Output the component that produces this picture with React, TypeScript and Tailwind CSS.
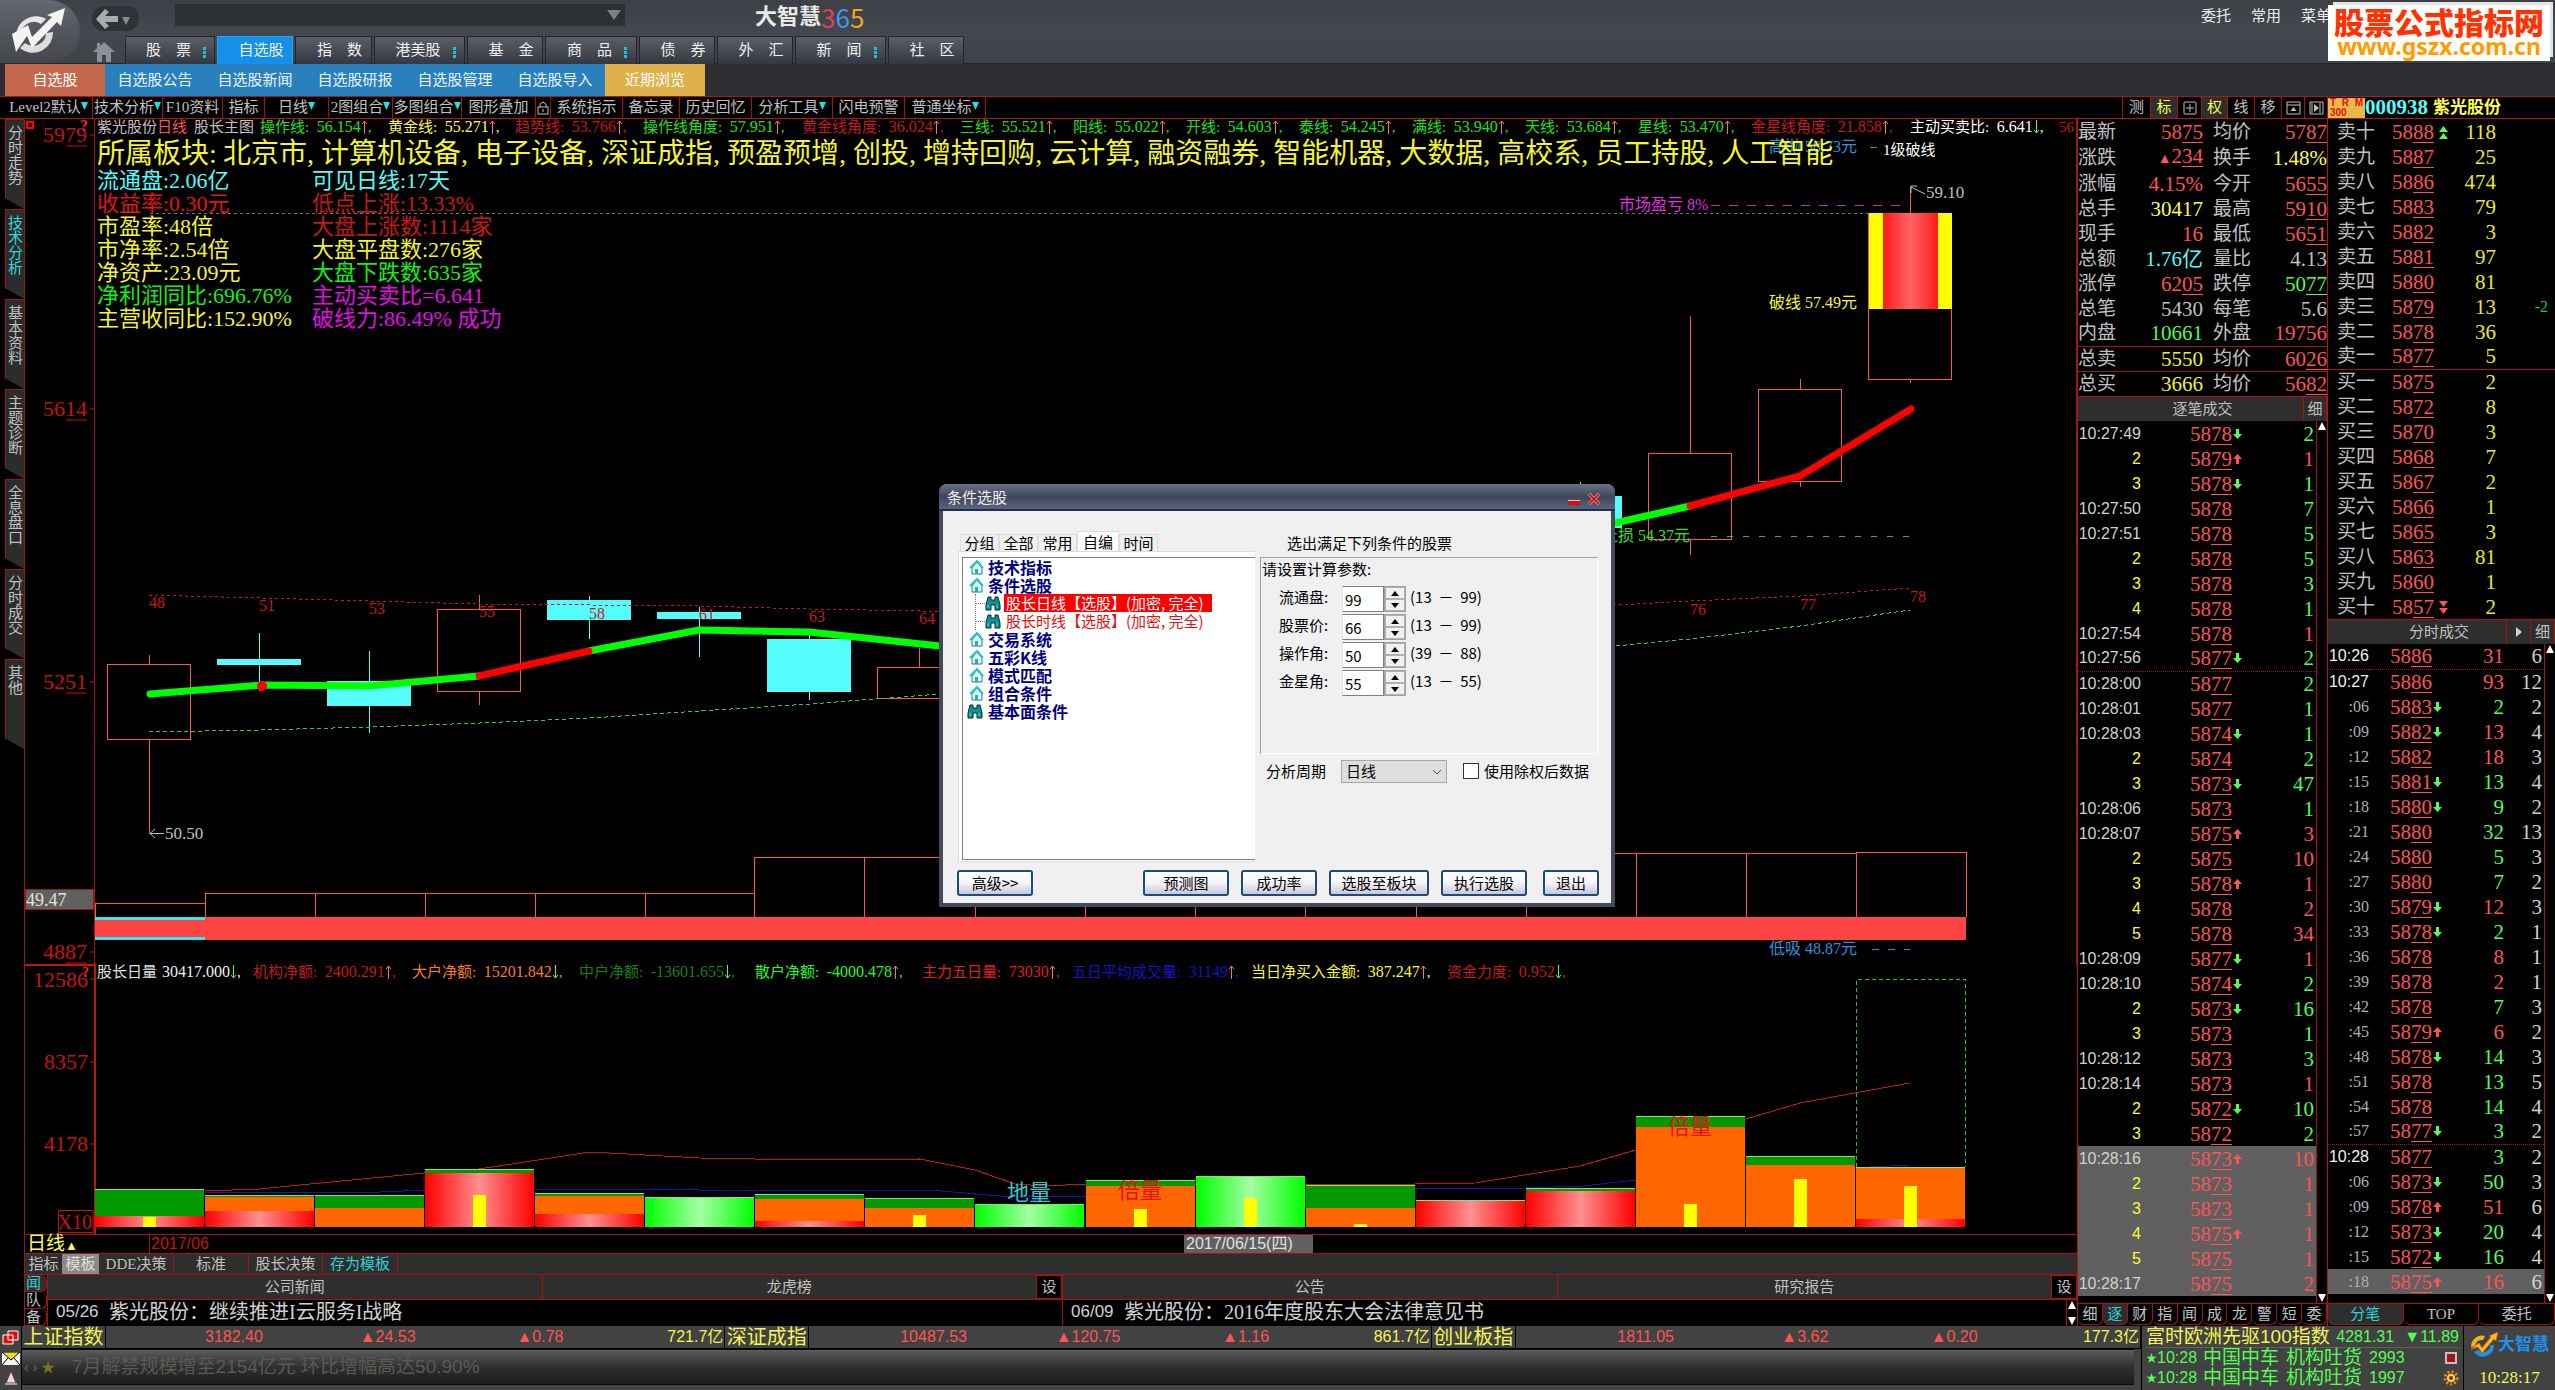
import React, { useState } from "react";

const RED = "#fc5454";
const GREEN = "#54fc54";

const NAV_TABS = [
  { label: "股　票", more: true, width: "w-[90px]" },
  { label: "自选股", active: true, width: "w-[76px]" },
  { label: "指　数", width: "w-[77px]" },
  { label: "港美股", more: true, width: "w-[91px]" },
  { label: "基　金", width: "w-[76px]" },
  { label: "商　品", more: true, width: "w-[92px]" },
  { label: "债　券", width: "w-[76px]" },
  { label: "外　汇", width: "w-[76px]" },
  { label: "新　闻", more: true, width: "w-[91px]" },
  { label: "社　区", width: "w-[76px]" },
];

const SUB_TABS = ["自选股公告", "自选股新闻", "自选股研报", "自选股管理", "自选股导入"];

const TOOLS = [
  { label: "Level2默认", menu: true, width: "w-[88px]" },
  { label: "技术分析", menu: true, width: "w-[70px]" },
  { label: "F10资料", width: "w-[60px]" },
  { label: "指标", width: "w-[42px]" },
  { label: "日线", menu: true, width: "w-[64px]" },
  { label: "2图组合", menu: true, width: "w-[64px]" },
  { label: "多图组合", menu: true, width: "w-[69px]" },
  { label: "图形叠加", width: "w-[74px]" },
  { label: "", lock: true, width: "w-[15px]" },
  { label: "系统指示", width: "w-[72px]" },
  { label: "备忘录", width: "w-[57px]" },
  { label: "历史回忆", width: "w-[72px]" },
  { label: "分析工具", menu: true, width: "w-[81px]" },
  { label: "闪电预警", width: "w-[72px]" },
  { label: "普通坐标", menu: true, width: "w-[81px]" },
];

const SIDE_TABS = ["分时走势", "技术分析", "基本资料", "主题诊断", "全息盘口", "分时成交", "其他"];

type Indicator = { label: string; value?: string; dir?: "up" | "down"; color: string; width: string };

const MAIN_INDICATORS: Indicator[] = [
  { label: "操作线", value: "56.154", dir: "up", color: "text-[#20e020]", width: "w-[128px]" },
  { label: "黄金线", value: "55.271", dir: "up", color: "text-[#fcfc54]", width: "w-[127px]" },
  { label: "趋势线", value: "53.766", dir: "up", color: "text-[#c41a1a]", width: "w-[128px]" },
  { label: "操作线角度", value: "57.951", dir: "up", color: "text-[#20e020]", width: "w-[159px]" },
  { label: "黄金线角度", value: "36.024", dir: "up", color: "text-[#c41a1a]", width: "w-[158px]" },
  { label: "三线", value: "55.521", dir: "up", color: "text-[#20e020]", width: "w-[113px]" },
  { label: "阳线", value: "55.022", dir: "up", color: "text-[#20e020]", width: "w-[113px]" },
  { label: "开线", value: "54.603", dir: "up", color: "text-[#20e020]", width: "w-[113px]" },
  { label: "泰线", value: "54.245", dir: "up", color: "text-[#20e020]", width: "w-[113px]" },
  { label: "满线", value: "53.940", dir: "up", color: "text-[#20e020]", width: "w-[113px]" },
  { label: "天线", value: "53.684", dir: "up", color: "text-[#20e020]", width: "w-[113px]" },
  { label: "星线", value: "53.470", dir: "up", color: "text-[#20e020]", width: "w-[113px]" },
  { label: "金星线角度", value: "21.858", dir: "up", color: "text-[#c41a1a]", width: "w-[159px]" },
  { label: "主动买卖比", value: "6.641", dir: "down", color: "text-white", width: "w-[149px]" },
];

const VOLUME_INDICATORS: Indicator[] = [
  { label: "机构净额", value: "2400.291", dir: "up", color: "text-[#c41a1a]", width: "w-[159px]" },
  { label: "大户净额", value: "15201.842", dir: "down", color: "text-[#ff7a1e]", width: "w-[167px]" },
  { label: "中户净额", value: "-13601.655", dir: "down", color: "text-[#12801a]", width: "w-[176px]" },
  { label: "散户净额", value: "-4000.478", dir: "up", color: "text-[#20fc20]", width: "w-[167px]" },
  { label: "主力五日量", value: "73030", dir: "up", color: "text-[#e02020]", width: "w-[150px]" },
  { label: "五日平均成交量", value: "31149", dir: "up", color: "text-[#1414c8]", width: "w-[179px]" },
  { label: "当日净买入金额", value: "387.247", dir: "up", color: "text-[#fcfc20]", width: "w-[196px]" },
  { label: "资金力度", value: "0.952", dir: "down", color: "text-[#c41a1a]", width: "w-[140px]" },
];

const BOARDS = [
  "北京市", "计算机设备", "电子设备", "深证成指", "预盈预增", "创投", "增持回购",
  "云计算", "融资融券", "智能机器", "大数据", "高校系", "员工持股", "人工智能",
];

const FACTS = [
  ["流通盘:2.06亿", "text-[#54fcfc]", "可见日线:17天", "text-[#54fcfc]"],
  ["收益率:0.30元", "text-[#e01414]", "低点上涨:13.33%", "text-[#c41a1a]"],
  ["市盈率:48倍", "text-[#f4f430]", "大盘上涨数:1114家", "text-[#c41a1a]"],
  ["市净率:2.54倍", "text-[#f4f430]", "大盘平盘数:276家", "text-[#f4f430]"],
  ["净资产:23.09元", "text-[#f4f430]", "大盘下跌数:635家", "text-[#14f014]"],
  ["净利润同比:696.76%", "text-[#14f014]", "主动买卖比=6.641", "text-[#e010e0]"],
  ["主营收同比:152.90%", "text-[#f4f430]", "破线力:86.49% 成功", "text-[#e010e0]"],
];

// label, value, colour, underline the decimals
type Cell = [string, string, string, boolean];
const SUMMARY: [Cell, Cell][] = [
  [["最新", "5875", "text-[#fc5454]", true], ["均价", "5787", "text-[#fc5454]", true]],
  [["涨跌", "▲234", "text-[#fc5454]", true], ["换手", "1.48%", "text-[#fcfc54]", false]],
  [["涨幅", "4.15%", "text-[#fc5454]", false], ["今开", "5655", "text-[#fc5454]", true]],
  [["总手", "30417", "text-[#fcfc54]", false], ["最高", "5910", "text-[#fc5454]", true]],
  [["现手", "16", "text-[#fc5454]", false], ["最低", "5651", "text-[#fc5454]", true]],
  [["总额", "1.76亿", "text-[#54fcfc]", false], ["量比", "4.13", "text-[#c0c0c0]", false]],
  [["涨停", "6205", "text-[#fc5454]", true], ["跌停", "5077", "text-[#54fc54]", true]],
  [["总笔", "5430", "text-[#c0c0c0]", false], ["每笔", "5.6", "text-[#c0c0c0]", false]],
  [["内盘", "10661", "text-[#54fc54]", false], ["外盘", "19756", "text-[#fc5454]", false]],
  [["总卖", "5550", "text-[#f0f030]", false], ["均价", "6026", "text-[#fc5454]", true]],
  [["总买", "3666", "text-[#f0f030]", false], ["均价", "5682", "text-[#fc5454]", true]],
];

const ASKS = [
  ["卖十", "5888", "118"], ["卖九", "5887", "25"], ["卖八", "5886", "474"], ["卖七", "5883", "79"],
  ["卖六", "5882", "3"], ["卖五", "5881", "97"], ["卖四", "5880", "81"], ["卖三", "5879", "13"],
  ["卖二", "5878", "36"], ["卖一", "5877", "5"],
];
const BIDS = [
  ["买一", "5875", "2"], ["买二", "5872", "8"], ["买三", "5870", "3"], ["买四", "5868", "7"],
  ["买五", "5867", "2"], ["买六", "5866", "1"], ["买七", "5865", "3"], ["买八", "5863", "81"],
  ["买九", "5860", "1"], ["买十", "5857", "2"],
];

// time, price (u/d = moved up/down), lots (r/g = buy/sell)
const TICKS = [
  "10:27:49 5878d 2g", "2 5879u 1r", "3 5878d 1g", "10:27:50 5878 7g", "10:27:51 5878 5g",
  "2 5878 5g", "3 5878 3g", "4 5878 1g", "10:27:54 5878 1r", "10:27:56 5877d 2g",
  "10:28:00 5877 2g", "10:28:01 5877 1g", "10:28:03 5874d 1g", "2 5874 2g", "3 5873d 47g",
  "10:28:06 5873 1g", "10:28:07 5875u 3r", "2 5875 10r", "3 5878u 1r", "4 5878 2r",
  "5 5878 34r", "10:28:09 5877d 1r", "10:28:10 5874d 2g", "2 5873d 16g", "3 5873 1g",
  "10:28:12 5873 3g", "10:28:14 5873 1r", "2 5872d 10g", "3 5872 2g", "10:28:16 5873u 10r",
  "2 5873 1r", "3 5873 1r", "4 5875u 1r", "5 5875 1r", "10:28:17 5875 2r",
];

const MINUTES = [
  "10:26 5886 31r 6", "10:27 5886 93r 12", ":06 5883d 2g 2", ":09 5882d 13r 4", ":12 5882 18r 3",
  ":15 5881d 13g 4", ":18 5880d 9g 2", ":21 5880 32g 13", ":24 5880 5g 3", ":27 5880 7g 2",
  ":30 5879d 12r 3", ":33 5878d 2g 1", ":36 5878 8r 1", ":39 5878 2r 1", ":42 5878 7g 3",
  ":45 5879u 6r 2", ":48 5878d 14g 3", ":51 5878 13g 5", ":54 5878 14g 4", ":57 5877d 3g 2",
  "10:28 5877 3g 2", ":06 5873d 50g 3", ":09 5878u 51r 6", ":12 5873d 20g 4", ":15 5872d 16g 4",
  ":18 5875u 16r 6",
];

const INDEXES = [
  { name: "上证指数", last: "3182.40", change: "▲24.53", pct: "▲0.78", amount: "721.7亿" },
  { name: "深证成指", last: "10487.53", change: "▲120.75", pct: "▲1.16", amount: "861.7亿" },
  { name: "创业板指", last: "1811.05", change: "▲3.62", pct: "▲0.20", amount: "177.3亿" },
];

const Price = ({ value }: { value: string }) => (
  <>
    {value.slice(0, -2)}
    <span className="underline decoration-1 underline-offset-3">{value.slice(-2)}</span>
  </>
);

const MoveArrow = ({ dir }: { dir: string }) => {
  if (dir !== "u" && dir !== "d") return null;
  return (
    <svg viewBox="0 0 9 10" className="inline-block w-[9px] h-[10px] ml-px align-[2px]">
      <path
        d={dir === "u" ? "M4.500 0L9 5H6V10H3V5H0Z" : "M4.500 10L0 5H3V0H6V5H9Z"}
        fill={dir === "u" ? RED : GREEN}
      />
    </svg>
  );
};

const FlowArrow = ({ dir }: { dir?: string }) => (
  <svg viewBox="0 0 7 14" className="inline-block w-[7px] h-[14px] align-[-2px]" fill="none">
    <path
      d={dir === "up" ? "M3.500 1V14M1 4L3.500 1L6 4" : "M3.500 0V13M1 10L3.500 13L6 10"}
      stroke={dir === "up" ? "#fc7070" : GREEN}
    />
  </svg>
);

const IndicatorItem = ({ label, value, dir, color, width }: Indicator) => (
  <span className={`shrink-0 ${color} ${width}`}>
    {label}:&nbsp; <span className="text-[16px]">{value}</span>
    <FlowArrow dir={dir} />,
  </span>
);

const Header = () => (
  <header>
    <div className="flex h-16 bg-linear-to-b from-[#3d4146] via-[#43474f] to-[#3e424a] border-b border-[#25272b]">
      <div className="w-20 shrink-0 bg-linear-to-b from-[#63676f] to-[#43464d] rounded-r-[40px] flex items-center pl-3">
        <svg viewBox="0 0 54 48" className="w-[54px] h-[48px]">
          <path d="M4 28A20 20 0 0 1 34 11L29 16A13 13 0 0 0 9 28Z" fill="#e6e6e6" />
          <path d="M41 24A20 20 0 0 1 8 40L13 35A13 13 0 0 0 34 25Z" fill="#dcdcdc" />
          <path d="M0 26L16 17L20 29L40 9L35 7L53 0L49 18L45 14L20 40L15 28L4 44Z" fill="#f4f4f4" />
        </svg>
      </div>
      <div className="flex-1 min-w-0">
        <div className="flex h-9 items-start">
          <button aria-label="后退" className="ml-[12px] mt-[6px] w-[47px] h-[25px] rounded-xl bg-[#2f3236] flex items-center pl-1 gap-1">
            <svg viewBox="0 0 22 20" className="w-[22px] h-[20px]">
              <path d="M0 10L9 0L13 3L9 7H22V13H9L13 17L9 20Z" fill="#a9abae" />
            </svg>
            <svg viewBox="0 0 8 8" className="w-2 h-2 mt-1"><path d="M0 0H8L4 8Z" fill="#8a8c90" /></svg>
          </button>
          <div className="ml-[36px] mt-[4px] w-[450px] h-[22px] bg-[#2d3032] flex items-center pr-1">
            <input aria-label="搜索" className="flex-1 h-full bg-transparent text-sm text-white px-2" />
            <svg viewBox="0 0 14 10" className="w-[14px] h-[10px]"><path d="M0 0H14L7 10Z" fill="#7d8082" /></svg>
          </div>
          <h1 className="ml-[130px] mt-[4px] text-[22px] leading-[26px] font-bold text-[#e8e8e8] flex">
            大智慧
            <span className="text-[26px] font-[family-name:'Noto_Sans_CJK_SC',sans-serif] font-normal">
              <span className="text-[#e0405a]">3</span>
              <span className="text-[#3f9be8]">6</span>
              <span className="text-[#f0a818]">5</span>
            </span>
          </h1>
        </div>
        <nav className="flex items-stretch h-7">
          <a href="#home" aria-label="首页" className="w-[45px] shrink-0 flex items-center pl-[13px] pt-1">
            <svg viewBox="0 0 22 20" className="w-[22px] h-[20px]">
              <path d="M11 0L22 10H18V20H13V13H9V20H4V10H0L4 6V1H7V4Z" fill="#8d9096" />
            </svg>
          </a>
          {NAV_TABS.map((tab) => (
            <a
              key={tab.label}
              href="#nav"
              className={`mr-[2px] shrink-0 flex items-center justify-center gap-[12px] border-t border-x text-[15px] text-[#f0f0f0] ${tab.width} ${
                tab.active
                  ? "bg-[#1490e8] border-[#20a8f0] pl-3"
                  : "bg-linear-to-b from-[#5a5f6a] to-[#343840] border-[#24262b] pl-3"
              }`}
            >
              {tab.label}
              {tab.more && (
                <svg viewBox="0 0 3 11" className="w-[3px] h-[11px] mt-1">
                  <path d="M0 0H3V3H0ZM0 4H3V7H0ZM0 8H3V11H0Z" fill="#20c0d0" />
                </svg>
              )}
            </a>
          ))}
        </nav>
      </div>
      <div className="relative w-[354px] shrink-0 flex gap-5 pt-[6px] text-[15px] leading-[20px] text-[#ececec]">
        <a href="#trade">委托</a>
        <a href="#common">常用</a>
        <a href="#menu">菜单</a>
        <div className="absolute right-0.5 top-0.5 w-[220px] h-[55px] bg-[#e4e4e4]" />
        <div className="absolute right-[5px] top-[5px] w-[222px] h-[56px] bg-white flex flex-col items-center whitespace-nowrap">
          <span className="text-[30px] leading-[32px] font-black text-[#ff3200] font-[family-name:'Noto_Sans_CJK_SC',sans-serif]">
            股票公式指标网
          </span>
          <span className="text-[23px] leading-[18px] font-bold text-[#ff9c00] font-[family-name:'Noto_Sans',sans-serif]">
            www.gszx.com.cn
          </span>
        </div>
      </div>
    </div>
    <nav className="flex h-8 pl-[5px] bg-[#2c2e32] text-[15px] leading-[32px] text-center text-white">
      <a href="#own" className="w-[100px] bg-[#c6684e]">自选股</a>
      {SUB_TABS.map((label) => (
        <a key={label} href="#sub" className="w-[100px] bg-[#2a80bc] text-[#e8f4ff]">{label}</a>
      ))}
      <a href="#recent" className="w-[100px] bg-[#e0b04a]">近期浏览</a>
    </nav>
  </header>
);

const Toolbar = () => (
  <div className="flex h-[23px] pl-[5px] border-y border-[#b01414] text-[15px] leading-[21px] text-[#c0c0c0] whitespace-nowrap">
    {TOOLS.map((tool) => (
      <button
        key={tool.label}
        aria-label={tool.label || "锁定"}
        className={`shrink-0 flex items-center justify-center border-r border-[#a01414] ${tool.width}`}
      >
        {tool.label}
        {tool.lock && (
          <svg viewBox="0 0 12 14" className="w-3 h-[14px]" fill="none" stroke="#c0c0c0">
            <rect x="1" y="6" width="10" height="7" />
            <path d="M3 6V3L6 1L9 3V6M6 8V11" />
          </svg>
        )}
        {tool.menu && (
          <svg viewBox="0 0 7 8" className="w-[7px] h-2 shrink-0 mb-1"><path d="M0 0H7L3.500 8Z" fill="#20e0e0" /></svg>
        )}
      </button>
    ))}
    <div className="flex-1" />
    <button className="w-[28px] border-l border-[#a01414]">测</button>
    <button className="w-[27px] border-l border-[#a01414] bg-[#2e2e2e] text-[#fcfc54]">标</button>
    <button className="w-[24px] border-l border-[#a01414] flex items-center justify-center" aria-label="田字">
      <svg viewBox="0 0 14 14" className="w-[14px] h-[14px]" fill="none" stroke="#c0c0c0">
        <rect x="1" y="1" width="12" height="12" rx="1" />
        <path d="M3 7H11M7 3V11" />
      </svg>
    </button>
    <button className="w-[26px] border-l border-[#a01414] bg-[#2e2e2e] text-[#fcfc54]">权</button>
    <button className="w-[27px] border-l border-[#a01414]">线</button>
    <button className="w-[27px] border-l border-[#a01414]">移</button>
    <button className="w-[23px] border-l border-[#a01414] flex items-center justify-center" aria-label="收起">
      <svg viewBox="0 0 15 14" className="w-[15px] h-[14px]" fill="none" stroke="#c0c0c0">
        <path d="M1 1H14V13H1ZM1 4H14" />
        <path d="M4.500 10L7.500 6L10.500 10Z" fill="#c0c0c0" stroke="none" />
      </svg>
    </button>
    <button className="w-[23px] border-l border-[#a01414] flex items-center justify-center" aria-label="下一页">
      <svg viewBox="0 0 15 14" className="w-[15px] h-[14px]" fill="none" stroke="#c0c0c0">
        <path d="M1 1H14V13H1ZM11 2V12M3 2V12" />
        <path d="M5 3L10 7L5 11Z" fill="#c0c0c0" stroke="none" />
      </svg>
    </button>
    <div className="w-[228px] shrink-0 flex items-center border-l border-[#a01414]">
      <span className="w-[37px] shrink-0 px-0.5 bg-[#e8b848] text-[#e01010] text-[10px] leading-[10px] font-bold font-[family-name:'Liberation_Sans',sans-serif]">
        <span className="flex justify-between">
          <span>T</span>
          <span>R</span>
          <span>M</span>
        </span>
        <span className="block">300</span>
      </span>
      <span className="text-[21px] font-bold text-[#54fcfc]">000938</span>
      <span className="ml-[5px] text-[17px] font-bold text-[#fcfc54]">紫光股份</span>
    </div>
  </div>
);

const SideTabs = () => (
  <nav className="w-[25px] shrink-0 pl-[5px] bg-black border-r border-[#a01414] flex flex-col">
    {SIDE_TABS.map((label, i) => (
      <a
        key={label}
        href="#side"
        className={`h-[90px] bg-[#2c2c2c] border-t border-l border-[#a01414] pt-[6px] px-[2px] text-[15px] leading-[15px] text-center [clip-path:polygon(0_0,100%_0,100%_100%,0_88%)] ${
          i === 1 ? "text-[#30d8d8]" : "text-[#c0c0c0]"
        }`}
      >
        {label.split("").map((ch) => (
          <span key={ch} className="block">{ch}</span>
        ))}
      </a>
    ))}
  </nav>
);

// x centre of the nth bar in chart space
const cx = (i: number) => 149 + i * 110 + (i > 12 ? 1 : 0);

const CANDLES = [
  { i: 0, top: 664, bottom: 739, high: 655, low: 834, up: true },
  { i: 1, top: 659, bottom: 664, high: 633, low: 691 },
  { i: 2, top: 681, bottom: 705, high: 651, low: 733 },
  { i: 3, top: 609, bottom: 691, high: 595, low: 705, up: true },
  { i: 4, top: 600, bottom: 619, high: 596, low: 639 },
  { i: 5, top: 612, bottom: 618, high: 607, low: 657 },
  { i: 6, top: 639, bottom: 691, high: 632, low: 700 },
  { i: 7, top: 667, bottom: 698, high: 648, low: 698, up: true },
  { i: 13, top: 496, bottom: 527, high: 482, low: 540 },
  { i: 14, top: 453, bottom: 539, high: 316, low: 555, up: true },
  { i: 15, top: 389, bottom: 481, high: 379, low: 487, up: true },
  { i: 16, top: 213, bottom: 379, high: 187, low: 383, up: true },
];

const TREND_NUMBERS = [
  [149, 608, "48"], [259, 611, "51"], [369, 614, "53"], [479, 617, "55"], [589, 619, "58"],
  [699, 620, "61"], [809, 622, "63"], [919, 624, "64"], [1690, 615, "76"], [1800, 610, "77"], [1910, 602, "78"],
] as const;

const STEPS = [
  [95, 205, 903], [205, 315, 893], [315, 425, 893], [425, 535, 893], [535, 645, 893], [645, 754, 893],
  [754, 864, 857], [864, 975, 857], [975, 1085, 857], [1085, 1195, 857], [1195, 1305, 855], [1305, 1416, 855],
  [1416, 1526, 853], [1526, 1636, 853], [1636, 1746, 853], [1746, 1856, 853], [1856, 1966, 852],
];

const AxisPrice = ({ y, value }: { y: number; value: string }) => (
  <g>
    <text x="87" y={y + 7} textAnchor="end" fontSize="22" fill="#c41414">{value}</text>
    <path d={`M66 ${y + 11}H87M90 ${y}H94`} stroke="#c41414" />
  </g>
);

const PriceChart = () => (
  <div className="relative">
    <svg viewBox="25 119 2052 845" className="block w-full h-auto">
      <defs>
        <linearGradient id="hot">
          <stop offset="0" stopColor="#ff1a1a" />
          <stop offset="0.5" stopColor="#ff6464" />
          <stop offset="1" stopColor="#ff1a1a" />
        </linearGradient>
      </defs>
      <g shapeRendering="crispEdges" fill="none">
        <path d="M94.500 119V964M2076.500 119V964" stroke="#a01414" />
        <path d="M150 213.500H1869" stroke="#707070" strokeDasharray="3 3" />
        {STEPS.map(([x1, x2, y]) => (
          <path key={x1} d={`M${x1 + 0.5} 917V${y + 0.5}H${x2 + 0.5}V917`} stroke="#fc5454" />
        ))}
        <rect x="95" y="917" width="1871" height="23" fill="#ff4444" />
        <path d="M95 918.500H205M95 938.500H205" stroke="#30e8f0" strokeWidth="3" />
        {CANDLES.map(({ i, top, bottom, high, low, up }) => (
          <g key={i}>
            <path d={`M${cx(i) + 0.5} ${high}V${top}M${cx(i) + 0.5} ${bottom}V${low}`} stroke={up ? "#fc5454" : "#54fcfc"} />
            <rect
              x={cx(i) - 41.5}
              y={top + 0.5}
              width="83"
              height={bottom - top}
              fill={up ? "none" : "#54fcfc"}
              stroke={up ? "#fc5454" : "#54fcfc"}
            />
          </g>
        ))}
        <rect x="1869" y="213" width="83" height="96" fill="#ffff00" />
        <rect x="1883" y="213" width="55" height="96" fill="url(#hot)" />
        <path
          d="M149 595L260 598L370 601L480 604L590 605L700 606L810 609L920 611L1250 614L1615 605L1690 601L1800 596L1910 588"
          stroke="#c41414"
          strokeDasharray="3 3"
        />
        <path
          d="M149 732L260 730L370 727L480 723L590 718L700 711L810 704L940 694L1300 672L1615 646L1690 639L1800 626L1910 610"
          stroke="#30d030"
          strokeDasharray="4 3"
        />
        <path d="M1711 205.500H1909" stroke="#c030c0" strokeDasharray="9 9" />
        <path d="M1711 536.500H1909" stroke="#30c030" strokeDasharray="6 10" />
        <path d="M1872 949.500H1910M1870 147.500H1880" stroke="#3090d8" strokeDasharray="7 9" />
      </g>
      <g fill="none" strokeWidth="7" strokeLinecap="round" strokeLinejoin="round">
        <path d="M150 694L262 685L369 686L479 676M589 651L699 630L809 632L940 646M1560 537L1615 523L1690 506" stroke="#00ff00" />
        <path d="M479 676L589 651M1690 506L1800 476L1911 409" stroke="#ff0000" />
      </g>
      <circle cx="262" cy="686" r="5" fill="#ff0000" />

      <AxisPrice y={135} value="5979" />
      <AxisPrice y={409} value="5614" />
      <AxisPrice y={682} value="5251" />
      <AxisPrice y={952} value="4887" />
      <text x="80" y="131" fontSize="16" fontWeight="bold" fill="#ff2020">?</text>
      <path d="M27 122H33V128H27Z" fill="none" stroke="#ff0000" strokeWidth="2" />
      <rect x="25.500" y="889.500" width="68" height="20" fill="#606060" stroke="#a01414" />
      <text x="26" y="906" fontSize="18" fill="#e0e0e0">49.47</text>

      <g fontSize="16" fill="#c41a1a">
        {TREND_NUMBERS.map(([x, y, n]) => (
          <text key={n} x={x} y={y}>{n}</text>
        ))}
      </g>
      <g fontSize="17">
        <path d="M164 833.500H150M155 829L150 833.500L155 838M1911 187L1925 194M1911 193V186H1917" fill="none" stroke="#c0c0c0" />
        <text x="165" y="839" fill="#c0c0c0">50.50</text>
        <text x="1926" y="198" fill="#c0c0c0">59.10</text>
      </g>
      <g fontSize="16">
        <text x="1619" y="210" fill="#e030e0">市场盈亏 8%</text>
        <text x="1769" y="308" fill="#f4f430">破线 57.49元</text>
        <text x="1602" y="541" fill="#30e030">止损 54.37元</text>
        <text x="1769" y="954" fill="#3090d8">低吸 48.87元</text>
        <text x="1769" y="152" fill="#3090d8">高抛 58.73元</text>
        <text x="1883" y="155" fontSize="15" fill="#ffffff">1级破线</text>
      </g>
    </svg>
    <div className="absolute top-0 left-[72px] right-0.5 overflow-hidden whitespace-nowrap">
      <div className="flex h-4 text-[15px] leading-[16px]">
        <span className="shrink-0 w-[97px] text-[#c0c0c0]">
          紫光股份<span className="text-[#fc5454]">日线</span>
        </span>
        <span className="shrink-0 w-[66px] text-[#c0c0c0]">股长主图</span>
        {MAIN_INDICATORS.map((item) => (
          <IndicatorItem key={item.label} {...item} />
        ))}
        <span className="text-[#c41a1a]">56</span>
      </div>
      <p className="pt-[3px] text-[28px] leading-[31px] text-[#f4f430]">
        所属板块
        {BOARDS.map((board, i) => (
          <span key={board}>
            <span className="inline-block w-[14px]">{i === 0 ? ":" : ","}</span>
            {board}
          </span>
        ))}
      </p>
      <div className="grid grid-cols-[215px_auto] text-[22px] leading-[23px]">
        {FACTS.map(([left, leftColor, right, rightColor]) => (
          <React.Fragment key={left}>
            <span className={leftColor}>{left}</span>
            <span className={rightColor}>{right}</span>
          </React.Fragment>
        ))}
      </div>
    </div>
  </div>
);

// stacked fills, top to bottom; "mark" is the yellow main-force bar
const VOLUME_BARS = [
  { layers: [["#009a00", 1189], ["url(#red)", 1216]], mark: 1217 },
  { layers: [["#009a00", 1195], ["#ff6600", 1197], ["url(#red)", 1211]] },
  { layers: [["#009a00", 1195], ["#ff6600", 1208]] },
  { layers: [["#009a00", 1169], ["url(#red)", 1173]], mark: 1195 },
  { layers: [["#009a00", 1193], ["#ff6600", 1196], ["url(#red)", 1214]] },
  { layers: [["url(#green)", 1197]] },
  { layers: [["#009a00", 1194], ["#ff6600", 1199], ["url(#red)", 1221]] },
  { layers: [["#009a00", 1198], ["#ff6600", 1208]], mark: 1215 },
  { layers: [["url(#green)", 1204]] },
  { layers: [["#009a00", 1180], ["#ff6600", 1186]], mark: 1209 },
  { layers: [["url(#green)", 1176]], mark: 1198 },
  { layers: [["#009a00", 1185], ["#ff6600", 1208]], mark: 1224 },
  { layers: [["url(#red)", 1200]] },
  { layers: [["#009a00", 1188], ["url(#red)", 1191]] },
  { layers: [["#009a00", 1116], ["#ff6600", 1127]], mark: 1204 },
  { layers: [["#009a00", 1156], ["#ff6600", 1165]], mark: 1179 },
  { layers: [["#ff6600", 1167], ["url(#red)", 1219]], mark: 1186 },
] as { layers: [string, number][]; mark?: number }[];

const VolumeChart = () => (
  <div className="relative">
    <svg viewBox="25 964 2052 270" className="block w-full h-auto">
      <defs>
        <linearGradient id="red">
          <stop offset="0" stopColor="#ff0000" />
          <stop offset="0.5" stopColor="#ff9090" />
          <stop offset="1" stopColor="#ff0000" />
        </linearGradient>
        <linearGradient id="green">
          <stop offset="0" stopColor="#00ff00" />
          <stop offset="0.5" stopColor="#a4ffa4" />
          <stop offset="1" stopColor="#00ff00" />
        </linearGradient>
      </defs>
      <path d="M25 964.500H95M94.500 964V1234" stroke="#c01414" strokeWidth="2" shapeRendering="crispEdges" />
      <g fill="none" shapeRendering="crispEdges">
        <path
          d="M205 1191L259 1189L424 1173L479 1169L590 1152L700 1158L810 1160L920 1159L975 1170L1015 1184L1045 1186L1086 1184L1415 1184L1475 1183L1580 1166L1636 1150L1690 1140L1746 1119L1800 1103L1910 1083"
          stroke="#c41414"
        />
        <path
          d="M205 1192H380L424 1190L535 1189L700 1190H930L1000 1196L1086 1196L1415 1189L1525 1188L1583 1186L1636 1180L1870 1167L1910 1165"
          stroke="#1414b4"
        />
        <path d="M1856.500 1167V979.500H1965.500V1167" stroke="#30c030" strokeDasharray="4 3" />
      </g>
      <g shapeRendering="crispEdges">
        {VOLUME_BARS.map(({ layers, mark }, i) => {
          const x = 95 + i * 110 + (i > 8 ? 1 : 0);
          return (
            <g key={i}>
              {layers.map(([fill, y]) => (
                <rect key={y} x={x} y={y} width="109" height={1227 - y} fill={fill} />
              ))}
              <rect x={x} y={layers[0][1]} width="109" height="1" fill="#90e070" />
              {mark && <rect x={x + 48} y={mark} width="13" height={1227 - mark} fill="#ffff00" />}
            </g>
          );
        })}
      </g>
      <g fontSize="22" fill="#c41414" textAnchor="end">
        <text x="88" y="987">12586</text>
        <text x="88" y="1069">8357</text>
        <text x="88" y="1151">4178</text>
        <text x="92" y="1229" fontSize="20">X10</text>
      </g>
      <path d="M58.500 1210.500H93V1232.500H58.500ZM90 979H94M90 1062H94M90 1144H94" fill="none" stroke="#c01414" />
      <text x="82" y="977" fontSize="14" fontWeight="bold" fill="#ff2020">?</text>
      <g fontSize="22" fill="#e01414">
        <text x="1007" y="1200" fill="#30c8d0">地量</text>
        <text x="1118" y="1198">倍量</text>
        <text x="1668" y="1134">倍量</text>
      </g>
    </svg>
    <div className="absolute top-0 left-[72px] right-0 flex overflow-hidden whitespace-nowrap text-[15px] leading-[16px]">
      <span className="shrink-0 w-[65px] text-[#e0e0e0]">股长日量</span>
      <span className="shrink-0 w-[91px] text-[#f0f0f0]">
        <span className="text-[16px]">30417.000</span>
        <FlowArrow dir="down" />,
      </span>
      {VOLUME_INDICATORS.map((item) => (
        <IndicatorItem key={item.label} {...item} />
      ))}
    </div>
  </div>
);

const NewsPanel = () => (
  <section className="text-[#c0c0c0]">
    <div className="flex h-5 border-y border-[#a01414] text-[16px] leading-[18px] font-[family-name:'Liberation_Sans','Noto_Sans_CJK_SC',sans-serif]">
      <button className="w-[124px] text-left pl-0.5 text-[19px] text-[#fcfc54]">
        日线<span className="text-[13px]">▲</span>
      </button>
      <span className="border-l border-[#a01414] pl-px w-[1035px] text-[#c41414]">2017/06</span>
      <span className="bg-[#606060] text-[#e0e0e0] w-[129px] pl-0.5">2017/06/15(四)</span>
    </div>
    <div className="flex h-5 bg-[#2e2e2e] text-[15px] leading-[20px] text-center">
      <button className="w-[37px]">指标</button>
      <button className="w-[37px] bg-[#8a8a8a] text-[#e0e0e0]">模板</button>
      <button className="w-[75px] border-r border-[#a01414]">DDE决策</button>
      <button className="w-[75px] border-r border-[#a01414]">标准</button>
      <button className="w-[74px] border-r border-[#a01414]">股长决策</button>
      <button className="w-[75px] border-r border-[#a01414] text-[#30d0d8]">存为模板</button>
    </div>
    <div className="flex border-t border-[#a01414]">
      <nav className="w-[22px] shrink-0 flex flex-col text-[15px] leading-[17px] text-center">
        <a href="#n1" className="h-[17px] pr-1 bg-[#2e2e2e] text-[#30d0d8] rounded-r-md border-b border-r border-[#a01414]">闻</a>
        <a href="#n2" className="h-[17px] pr-1 rounded-r-md border-b border-r border-[#a01414]">队</a>
        <a href="#n3" className="h-[17px] pr-1 rounded-r-md border-b border-r border-[#a01414]">备</a>
      </nav>
      {[
        { tabs: ["公司新闻", "龙虎榜"], date: "05/26", title: "紫光股份：继续推进I云服务I战略" },
        { tabs: ["公告", "研究报告"], date: "06/09", title: "紫光股份：2016年度股东大会法律意见书" },
      ].map((box, i) => (
        <div key={box.date} className="flex-1 border-l border-[#a01414]">
          <div className="flex h-[25px] bg-[#2e2e2e] border-b border-[#a01414] text-[15px] leading-[24px] text-center">
            <button className="flex-1 border-r border-[#a01414]">{box.tabs[0]}</button>
            <button className="flex-1">{box.tabs[1]}</button>
            <button className="w-[26px] bg-black border border-[#a01414] leading-[22px]">设</button>
          </div>
          <div className="flex h-[26px] pl-2 text-[20px] leading-[24px] text-[#d0d0d0]">
            <span className="w-[53px] text-[17px] font-[family-name:'Liberation_Sans',sans-serif]">{box.date}</span>
            <a href="#news" className="flex-1">{box.title}</a>
            {i === 1 && <ScrollTrack />}
          </div>
        </div>
      ))}
    </div>
  </section>
);

const ScrollMark = ({ down }: { down?: boolean }) => (
  <svg viewBox="0 0 8 8" className="w-2 h-2 shrink-0"><path d={down ? "M0 0H8L4 8Z" : "M0 8H8L4 0Z"} fill="#ffffff" /></svg>
);

const ScrollTrack = () => (
  <div className="w-[11px] shrink-0 flex flex-col items-center justify-between border-l border-[#a01414] py-px">
    <ScrollMark />
    <ScrollMark down />
  </div>
);

const QuoteColumn = () => (
  <section className="w-[250px] shrink-0 flex flex-col border-l border-[#b01414]">
    <table className="w-full table-fixed text-[21px] leading-[24px]">
      <tbody>
        {SUMMARY.map((row, i) => (
          <tr key={row[0][0]} className={i > 8 ? "h-[25px] border-t border-[#a01414]" : "h-[25px]"}>
            {row.map(([label, value, color, decimals], n) => (
              <React.Fragment key={label}>
                <th className="w-[48px] text-left text-[19px] font-normal text-[#c0c0c0] whitespace-nowrap">{label}</th>
                <td className={`text-right whitespace-nowrap ${n === 0 ? "w-[87px] pr-[10px]" : ""} ${color}`}>
                  {value[0] === "▲" && <span className="text-[14px]">▲</span>}
                  {decimals ? <Price value={value.replace("▲", "")} /> : value}
                </td>
              </React.Fragment>
            ))}
          </tr>
        ))}
      </tbody>
    </table>
    <div className="flex h-[25px] bg-[#2e2e2e] border-t border-[#a01414] text-[15px] leading-[24px] text-center text-[#c0c0c0]">
      <h2 className="flex-1 pl-6">逐笔成交</h2>
      <button className="w-[24px] border-x border-[#a01414]">细</button>
    </div>
    <div className="flex flex-1">
      <div className="flex-1">
        <table className="w-full table-fixed text-[21px] leading-[24px]">
          <tbody>
            {TICKS.map((line, i) => {
              const [time, price, lots] = line.split(" ");
              const full = time.includes(":");
              return (
                <tr key={i} className={`h-[25px] ${i > 28 ? "bg-[#606060]" : ""} ${i === 10 ? "border-t border-dotted border-[#a01414]" : ""}`}>
                  <td className={`w-[63px] text-right text-[16px] font-[family-name:'Liberation_Sans',sans-serif] ${full ? "text-[#d0d0d0]" : "text-[#fcfc30]"}`}>
                    {time}
                  </td>
                  <td className="pl-[49px] text-[#fc5454] whitespace-nowrap">
                    <Price value={price.slice(0, 4)} />
                    <MoveArrow dir={price.slice(4)} />
                  </td>
                  <td className={`w-[60px] text-right pr-0.5 ${lots.endsWith("r") ? "text-[#fc5454]" : "text-[#54fc54]"}`}>
                    {lots.slice(0, -1)}
                  </td>
                </tr>
              );
            })}
          </tbody>
        </table>
      </div>
      <ScrollTrack />
    </div>
    <nav className="flex h-[23px] border-t border-[#a01414] text-[15px] leading-[20px] text-center text-[#c0c0c0]">
      {"细逐财指闻成龙警短委".split("").map((ch) => (
        <button
          key={ch}
          className={`flex-1 mb-px border-b border-r border-[#a01414] rounded-b-md ${ch === "逐" ? "bg-[#2e2e2e] text-[#30d0d8]" : ""}`}
        >
          {ch}
        </button>
      ))}
    </nav>
  </section>
);

const DepthRows = ({ rows, edge }: { rows: string[][]; edge: string }) => (
  <>
    {rows.map(([label, price, lots]) => (
      <tr key={label} className="h-[25px]">
        <th className="w-[64px] pl-[9px] text-left text-[19px] font-normal text-[#c0c0c0]">{label}</th>
        <td className="w-[60px] text-[#fc5454] whitespace-nowrap">
          <Price value={price} />
          {label === edge && (
            <svg viewBox="0 0 9 13" className="inline-block w-[9px] h-[13px] ml-[5px] align-baseline">
              <path
                d={edge === "卖十" ? "M0 6L4.500 0L9 6ZM0 13L4.500 7L9 13Z" : "M0 0L4.500 6L9 0ZM0 7L4.500 13L9 7Z"}
                fill={edge === "卖十" ? GREEN : RED}
              />
            </svg>
          )}
        </td>
        <td className="w-[44px] text-right text-[#e8e830]">{lots}</td>
        <td className="text-right pr-[7px] text-[16px] text-[#30c030]">{label === "卖三" ? "-2" : ""}</td>
      </tr>
    ))}
  </>
);

const DepthColumn = () => (
  <section className="w-[228px] shrink-0 flex flex-col border-l border-[#b01414]">
    <table className="w-full table-fixed text-[21px] leading-[24px]">
      <tbody className="border-b border-[#a01414]">
        <DepthRows rows={ASKS} edge="卖十" />
      </tbody>
      <tbody>
        <DepthRows rows={BIDS} edge="买十" />
      </tbody>
    </table>
    <div className="flex h-[25px] bg-[#2e2e2e] border-t border-[#a01414] text-[15px] leading-[24px] text-center text-[#c0c0c0]">
      <h2 className="flex-1 pl-11">分时成交</h2>
      <button className="w-[24px] border-l border-[#a01414] flex items-center justify-center" aria-label="展开">
        <svg viewBox="0 0 6 10" className="w-[6px] h-[10px]"><path d="M0 0L6 5L0 10Z" fill="#d0d0d0" /></svg>
      </button>
      <button className="w-[25px] border-x border-[#a01414]">细</button>
    </div>
    <div className="flex flex-1">
      <div className="flex-1">
        <table className="w-full table-fixed text-[21px] leading-[24px]">
          <tbody>
            {MINUTES.map((line, i) => {
              const [time, price, lots, count] = line.split(" ");
              return (
                <tr
                  key={i}
                  className={`h-[25px] ${i === 25 ? "bg-[#606060]" : ""} ${i === 1 || i === 20 ? "border-t border-dotted border-[#a01414]" : ""}`}
                >
                  <td
                    className={`w-[41px] text-right text-[16px] ${
                      time[0] === ":" ? "text-[#b0b0b0]" : "text-[#f0f0f0] font-[family-name:'Liberation_Sans',sans-serif]"
                    }`}
                  >
                    {time}
                  </td>
                  <td className="pl-[21px] w-[90px] text-[#fc5454] whitespace-nowrap">
                    <Price value={price.slice(0, 4)} />
                    <MoveArrow dir={price.slice(4)} />
                  </td>
                  <td className={`text-right ${lots.endsWith("r") ? "text-[#fc5454]" : "text-[#54fc54]"}`}>{lots.slice(0, -1)}</td>
                  <td className="w-[40px] text-right pr-0.5 text-[#d0d0d0]">{count}</td>
                </tr>
              );
            })}
          </tbody>
        </table>
      </div>
      <ScrollTrack />
    </div>
    <nav className="flex h-[23px] border-t border-[#a01414] text-[15px] leading-[20px] text-center text-[#c0c0c0]">
      <button className="flex-1 mb-px bg-[#2e2e2e] text-[#30d0d8] border-b border-r border-[#a01414] rounded-b-md">分笔</button>
      <button className="flex-1 mb-px border-b border-r border-[#a01414] rounded-b-md">TOP</button>
      <button className="flex-1 mb-px border-b border-r border-[#a01414] rounded-b-md">委托</button>
    </nav>
  </section>
);

const StatusBar = () => (
  <footer className="flex h-16 bg-[#424242] text-[16px] font-[family-name:'Liberation_Sans','Noto_Sans_CJK_SC',sans-serif]">
    <div className="w-[22px] shrink-0 flex flex-col items-center justify-between py-1 border-r border-black">
      <svg viewBox="0 0 17 15" className="w-[17px] h-[15px]">
        <path d="M6 1H16V10H6ZM1 5H11V14H1Z" fill="#d81010" stroke="#ffffff" />
      </svg>
      <svg viewBox="0 0 18 13" className="w-[18px] h-[13px]">
        <path d="M0 0H18V13H0Z" fill="#f4f4f4" />
        <path d="M0 0L9 8L18 0Z" fill="#e8e020" stroke="#000000" />
        <path d="M0 13L6 6M18 13L12 6" stroke="#000000" />
      </svg>
      <svg viewBox="0 0 14 15" className="w-[14px] h-[15px]">
        <path d="M7 0L12 12H2Z" fill="#e0e0e0" stroke="#803030" />
        <path d="M1 12H13V14H1Z" fill="#a0a0a0" />
      </svg>
    </div>
    <div className="flex-1 min-w-0">
      <div className="grid grid-cols-[703fr_706fr_709fr] h-[23px] border-b border-black leading-[22px] text-[#fc5454]">
        {INDEXES.map((index) => (
          <div key={index.name} className="flex text-right">
            <span className="w-[84px] text-center text-[20px] text-[#f4f454] border-r border-black">{index.name}</span>
            <span className="flex-157">{index.last}</span>
            <span className="flex-153">{index.change}</span>
            <span className="flex-148">{index.pct}</span>
            <span className="flex-160 text-[#f4f454]">{index.amount}</span>
            <span className="w-0.5 border-r border-black" />
          </div>
        ))}
      </div>
      <div className="flex items-center gap-[10px] h-[36px] mr-[7px] pl-0.5 bg-linear-to-b from-[#5c5c5c] via-[#303030] to-[#1c1c1c] border-y border-[#0c0c0c] text-[19px] text-[#5c5a54]">
        <span className="w-[38px] text-[14px] text-[#7a7020] whitespace-nowrap">‹ › ★</span>
        <span>7月解禁规模增至2154亿元 环比增幅高达50.90%</span>
      </div>
    </div>
    <div className="w-[322px] shrink-0 px-1 border-l border-black text-[#54fc54]">
      <div className="flex h-[22px] items-center text-[#f4f454] border-b border-[#606060]">
        <span className="flex-1 text-[19px] leading-[20px] whitespace-nowrap">富时欧洲先驱100指数</span>
        <span className="w-[68px] text-[#54fc54]">4281.31</span>
        <span className="text-[#54fc54]">▼11.89</span>
      </div>
      {["2993", "1997"].map((lots, i) => (
        <div key={lots} className="flex h-[20px] items-center text-[19px] leading-[20px] whitespace-nowrap">
          <span className="text-[11px]">★</span>
          <span className="w-[46px] text-[16px]">10:28</span>
          <span className="w-[83px]">中国中车</span>
          <span className="w-[83px]">机构吐货</span>
          <span className="flex-1 text-[16px]">{lots}</span>
          <svg viewBox="0 0 16 16" className="w-4 h-4" fill="none">
            {i === 0 ? (
              <rect x="3" y="3" width="10" height="10" fill="#a01414" stroke="#c0c0c0" strokeWidth="2" />
            ) : (
              <>
                <circle cx="8" cy="8" r="6" stroke="#f08020" strokeWidth="3" strokeDasharray="2 2" />
                <circle cx="8" cy="8" r="3" fill="#802010" stroke="#ffe030" strokeWidth="2" />
              </>
            )}
          </svg>
        </div>
      ))}
    </div>
    <div className="w-[92px] shrink-0 border-l border-black flex flex-col items-center pt-1">
      <div className="flex h-[30px] items-center">
        <svg viewBox="0 0 28 26" className="w-[28px] h-[26px]">
          <path d="M1 15A11 11 0 0 1 15 4L13 8A7 7 0 0 0 5 14Z" fill="#f0b020" />
          <path d="M24 13A11 11 0 0 1 4 20L8 18A7 7 0 0 0 20 13Z" fill="#2090e8" />
          <path d="M1 17L9 11L12 16L21 5L19 4L28 0L26 9L24 7L12 21L8 15Z" fill="#f8c020" stroke="#e06010" />
        </svg>
        <span className="text-[17px] font-bold text-[#2090e8]">大智慧</span>
      </div>
      <time className="mt-2 text-[17px] leading-[20px] text-[#f4f454] font-[family-name:'Liberation_Serif',serif]">10:28:17</time>
    </div>
  </footer>
);

const HouseIcon = () => (
  <svg viewBox="0 0 15 15" className="w-[15px] h-[15px] shrink-0">
    <path d="M3 8V14H13V8L8 2Z" fill="#e8ffff" stroke="#108080" />
    <path d="M1 8L8 1L14 8M10 2V4" fill="none" stroke="#20c8d8" strokeWidth="2" />
    <path d="M6 14V9H9V14" fill="#20b0c0" />
  </svg>
);

const FinderIcon = () => (
  <svg viewBox="0 0 16 15" className="w-[16px] h-[15px] shrink-0">
    <path
      d="M3 1H6V4H10V1H13L15 9V14H10V9H6V14H1V9Z"
      fill="#109090"
      stroke="#003030"
    />
    <path d="M3 9V12M12 9V12" stroke="#60e0e0" />
  </svg>
);

const TREE = ["技术指标", "条件选股", "交易系统", "五彩K线", "模式匹配", "组合条件"];

const PARAMS = [
  { label: "流通盘", value: 99, range: "(13 － 99)" },
  { label: "股票价", value: 66, range: "(13 － 99)" },
  { label: "操作角", value: 50, range: "(39 － 88)" },
  { label: "金星角", value: 55, range: "(13 － 55)" },
];

const DIALOG_BUTTONS = [
  { label: "预测图", style: "w-[86px]" },
  { label: "成功率", style: "w-[76px]" },
  { label: "选股至板块", style: "w-[100px]" },
  { label: "执行选股", style: "w-[86px]" },
  { label: "退出", style: "w-[56px] ml-1" },
];

const BUTTON =
  "h-[26px] rounded-[3px] border-2 border-[#1e4a7c] bg-linear-to-b from-white via-[#f4f4fa] to-[#c8c8dc] text-[15px] leading-[20px] text-black";

const PickerDialog = () => {
  const [values, setValues] = useState(PARAMS.map((p) => p.value));
  const [adjusted, setAdjusted] = useState(false);

  const step = (index: number, by: number) =>
    setValues(values.map((v, i) => (i === index ? v + by : v)));

  return (
    <div
      role="dialog"
      aria-label="条件选股"
      className="absolute left-[939px] top-[484px] w-[676px] border-4 border-t-0 border-[#434a58] rounded-t-lg bg-[#f0f0f0] text-[15px] text-black font-[family-name:'Noto_Sans_CJK_SC',sans-serif]"
    >
      <div className="-mx-1 h-[27px] px-2 flex items-center rounded-t-lg bg-linear-to-b from-[#6a7286] via-[#40475a] to-[#5a6280] border-b-2 border-[#20304c]">
        <h2 className="flex-1 text-[15px] leading-[20px] text-[#f0f0f0]">条件选股</h2>
        <button aria-label="最小化" className="w-3 h-4 flex items-end mr-[8px]">
          <span className="w-3 h-[5px] bg-[#d81010] border-t border-[#ffc0c0]" />
        </button>
        <button aria-label="关闭" className="mr-[7px] mt-1">
          <svg viewBox="0 0 12 12" className="w-3 h-3">
            <path d="M1 1L11 11M11 1L1 11" stroke="#ffd0d0" strokeWidth="3" />
            <path d="M1 1L11 11M11 1L1 11" stroke="#d81010" strokeWidth="2" />
          </svg>
        </button>
      </div>

      <div className="flex pt-[19px] pl-[15px]">
        <div className="w-[297px]">
          <div className="flex items-end pl-0.5 h-[21px]">
            {["分组", "全部", "常用", "自编", "时间"].map((tab) => (
              <button
                key={tab}
                className={
                  tab === "自编"
                    ? "w-[42px] h-[20px] bg-white border border-b-0 border-[#dcdcdc] leading-[16px]"
                    : "w-[39px] h-[17px] border border-b-0 border-[#dcdcdc] leading-[16px]"
                }
              >
                {tab}
              </button>
            ))}
          </div>
          <div className="h-[311px] bg-white border border-[#dcdcdc] border-r-0 pt-[5px] pl-[3px]">
            <div className="h-[303px] border border-[#808080] border-r-0 text-[16px] leading-[16px]">
              {TREE.map((item) => (
                <React.Fragment key={item}>
                  <div className="flex items-center h-[18px] pl-[6px] gap-[4px] font-bold text-[#000080]">
                    <HouseIcon />
                    {item}
                  </div>
                  {item === "条件选股" && (
                    <ul className="ml-[12px] border-l border-dotted border-[#808080] text-[15px]">
                      <li className="flex items-center h-[18px]">
                        <span className="w-[9px] border-t border-dotted border-[#808080]" />
                        <FinderIcon />
                        <span className="ml-[3px] pl-0.5 w-[208px] leading-[18px] bg-[#ff0000] text-white whitespace-nowrap">
                          股长日线【选股】(加密, 完全)
                        </span>
                      </li>
                      <li className="flex items-center h-[18px]">
                        <span className="w-[9px] border-t border-dotted border-[#808080]" />
                        <FinderIcon />
                        <span className="ml-[5px] text-[#e01010] whitespace-nowrap">股长时线【选股】(加密, 完全)</span>
                      </li>
                    </ul>
                  )}
                </React.Fragment>
              ))}
              <div className="flex items-center h-[18px] pl-[4px] gap-[5px] font-bold text-[#000080]">
                <FinderIcon />
                基本面条件
              </div>
            </div>
          </div>
        </div>

        <div className="w-[338px] ml-[5px]">
          <p className="h-[27px] pl-[27px] pt-[3px] leading-[20px]">选出满足下列条件的股票</p>
          <div className="h-[197px] border border-[#a0a0a0] border-r-white border-b-white">
            <p className="pl-px pb-[6px] leading-[22px]">请设置计算参数:</p>
            {PARAMS.map((param, i) => (
              <div key={param.label} className="flex items-start h-[28px] leading-[22px]">
                <label htmlFor={param.label} className="w-[81px] pl-[18px]">
                  {param.label}:
                </label>
                <input
                  id={param.label}
                  value={values[i]}
                  onChange={(e) => setValues(values.map((v, n) => (n === i ? Number(e.target.value) || 0 : v)))}
                  className="w-[42px] h-[26px] bg-white border border-[#808080] border-l-[#e0e0e0] pl-0.5 text-[15px]"
                />
                <span className="w-[22px] h-[26px] border border-[#a0a0a0] flex flex-col">
                  <button aria-label="增加" onClick={() => step(i, 1)} className="flex-1 border border-[#b0b0b0] flex items-center justify-center">
                    <svg viewBox="0 0 8 5" className="w-2 h-[5px]"><path d="M0 5H8L4 0Z" /></svg>
                  </button>
                  <button aria-label="减少" onClick={() => step(i, -1)} className="flex-1 border border-[#b0b0b0] flex items-center justify-center">
                    <svg viewBox="0 0 8 5" className="w-2 h-[5px]"><path d="M0 0H8L4 5Z" /></svg>
                  </button>
                </span>
                <span className="pl-1 whitespace-pre">{param.range.replace("－", " － ")}</span>
              </div>
            ))}
          </div>
          <div className="flex items-center pt-[5px] pl-[6px] h-[29px]">
            <label htmlFor="period" className="w-[75px]">分析周期</label>
            <span className="relative w-[106px]">
              <select id="period" className="w-full h-[23px] appearance-none bg-[#dedede] border border-[#a8a8a8] pl-1 text-[15px] leading-[20px]">
                <option>日线</option>
              </select>
              <svg viewBox="0 0 10 6" className="absolute right-[5px] top-[9px] w-[10px] h-[6px]" fill="none" stroke="#505050">
                <path d="M1 1L5 5L9 1" />
              </svg>
            </span>
            <label className="flex items-center ml-4 gap-[5px] whitespace-nowrap">
              <input
                type="checkbox"
                checked={adjusted}
                onChange={() => setAdjusted(!adjusted)}
                className="appearance-none w-4 h-4 bg-white border border-[#303030] checked:bg-[#303030]"
              />
              使用除权后数据
            </label>
          </div>
        </div>
      </div>

      <div className="flex justify-end gap-3 pt-[8px] pb-[7px] pl-[14px] pr-[12px]">
        <button className={`${BUTTON} w-[76px] mr-auto`}>高级&gt;&gt;</button>
        {DIALOG_BUTTONS.map((button) => (
          <button key={button.label} className={`${BUTTON} ${button.style}`}>
            {button.label}
          </button>
        ))}
      </div>
    </div>
  );
};

export default function App() {
  return (
    <div className="relative min-h-screen overflow-hidden bg-black font-[family-name:'Liberation_Serif','Noto_Sans_CJK_SC',serif]">
      <Header />
      <Toolbar />
      <main className="flex">
        <SideTabs />
        <div className="flex-1 min-w-0">
          <PriceChart />
          <VolumeChart />
          <NewsPanel />
        </div>
        <QuoteColumn />
        <DepthColumn />
      </main>
      <StatusBar />
      <PickerDialog />
    </div>
  );
}
